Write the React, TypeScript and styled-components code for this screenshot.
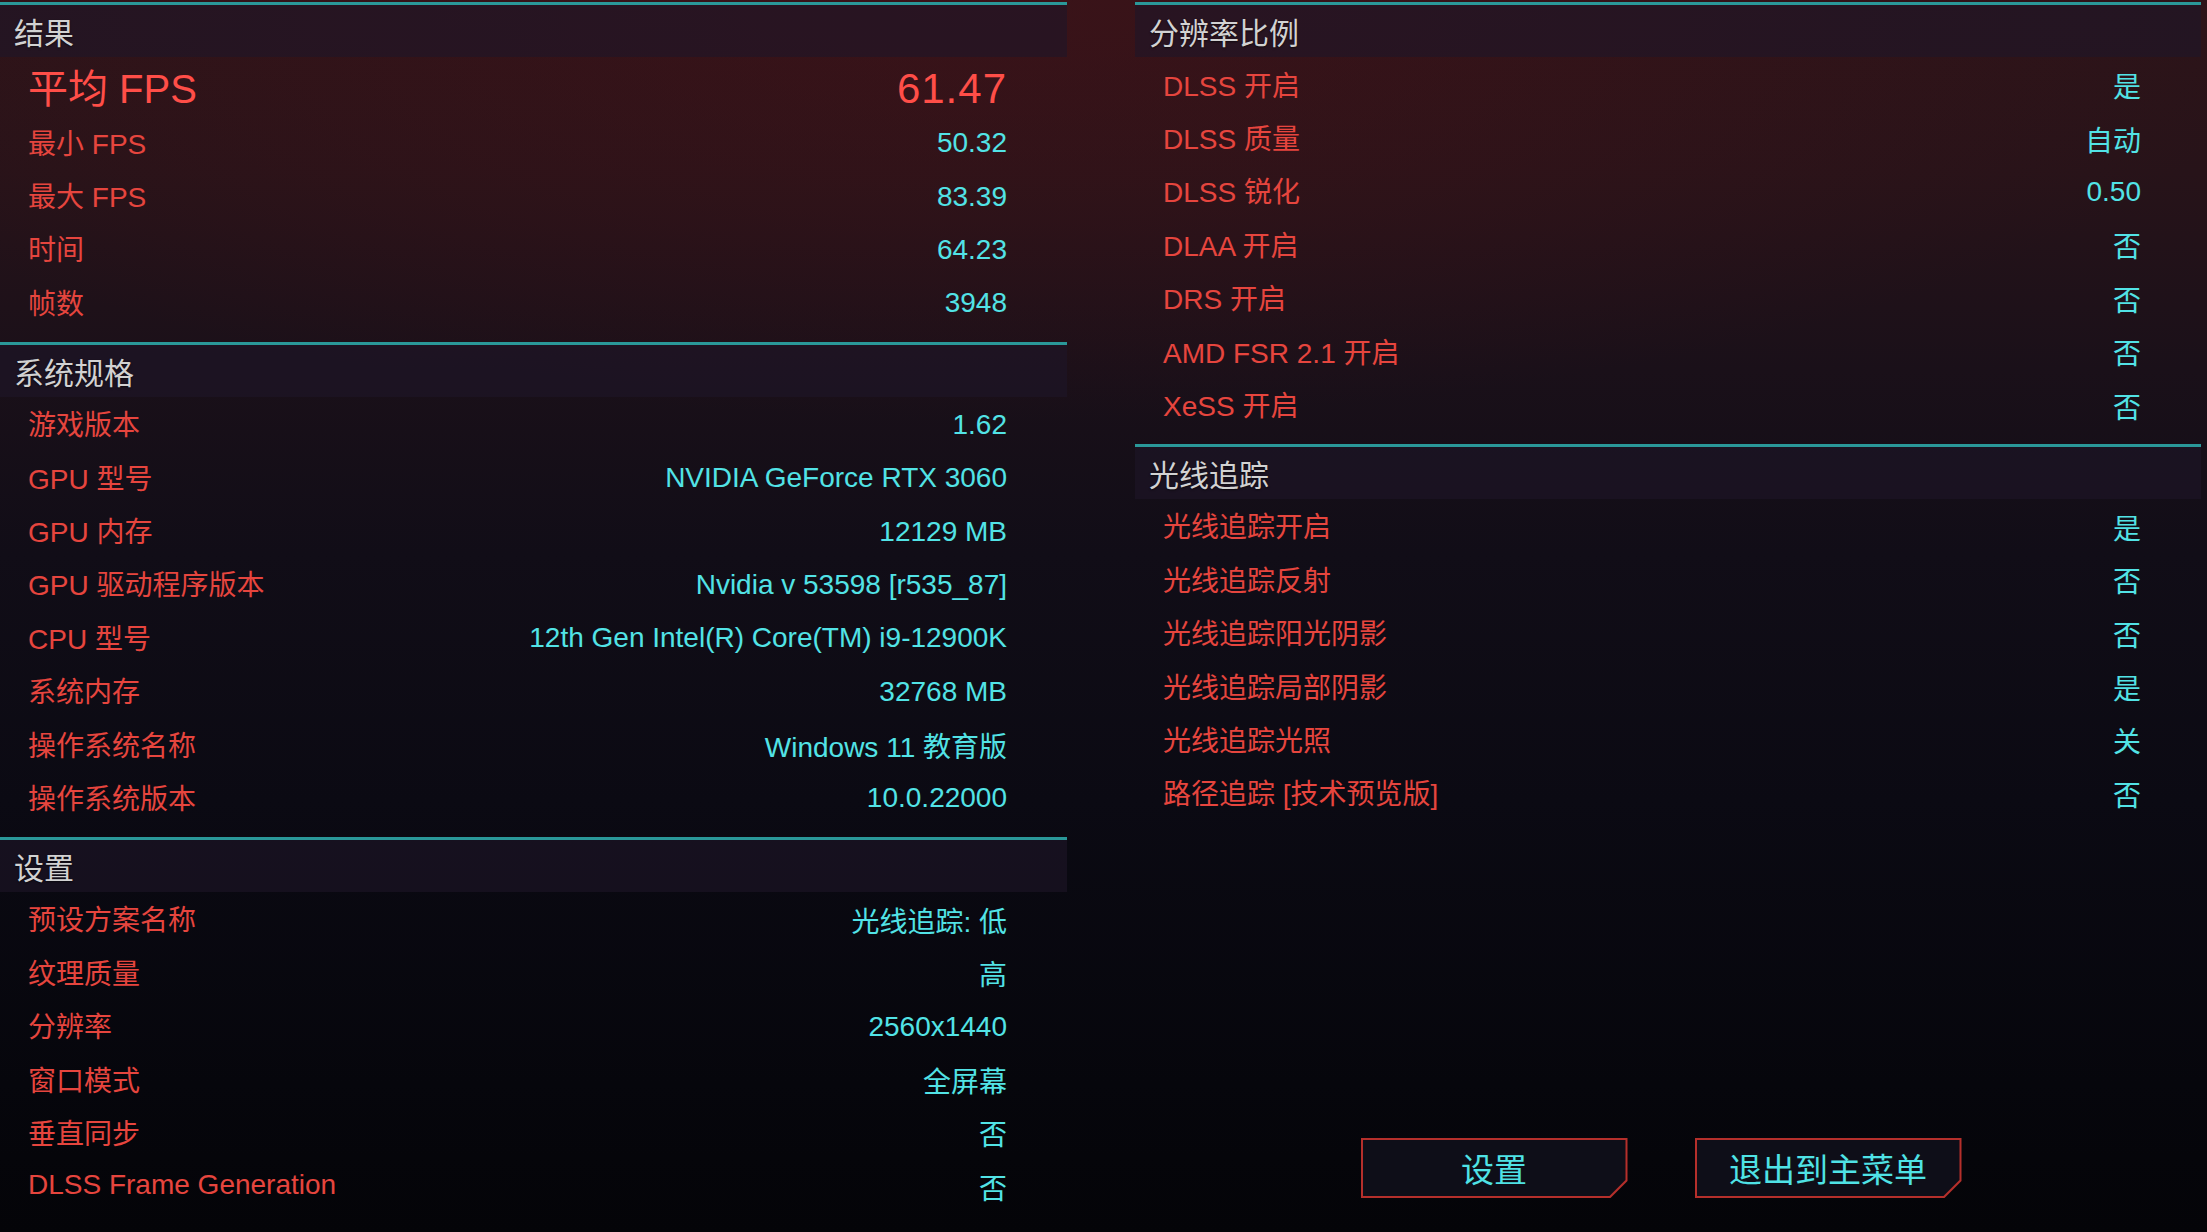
import React from 'react';
import styled, { createGlobalStyle } from 'styled-components';

const GlobalStyle = createGlobalStyle`
  html, body {
    margin: 0;
    padding: 0;
    background: #05050b;
  }
  body {
    font-family: 'Liberation Sans', 'Noto Sans CJK SC', sans-serif;
  }
`;

const Screen = styled.div`
  width: 2207px;
  height: 1232px;
  overflow: hidden;
  display: grid;
  grid-template-columns: 1067px 1066px;
  column-gap: 68px;
  background:
    radial-gradient(ellipse 1300px 420px at 45% 0%, rgba(70, 18, 24, 0.55), rgba(70, 18, 24, 0) 100%),
    linear-gradient(180deg, #2c1419 0%, #271319 14%, #1a1019 30%, #110d17 45%, #0b0a13 65%, #06060c 88%, #040408 100%);
`;

const Column = styled.div`
  display: flex;
  flex-direction: column;
  padding-top: 2px;
  height: 100%;
  box-sizing: border-box;
`;

const Section = styled.section`
  border-top: 3px solid #2a9899;
  padding-bottom: 13px;
`;

const SectionHeader = styled.div`
  height: 52px;
  display: flex;
  align-items: center;
  padding-left: 14px;
  background: rgba(30, 22, 40, 0.6);
  color: #d2d2d2;
  font-size: 30px;
  text-shadow: 0 1px 2px rgba(0, 0, 0, 0.6);
`;

const Row = styled.div<{ $big?: boolean }>`
  height: ${(p) => (p.$big ? '58px' : '53.4px')};
  display: flex;
  align-items: center;
  justify-content: space-between;
  padding: 0 60px 0 28px;
`;

const Label = styled.span<{ $big?: boolean }>`
  color: ${(p) => (p.$big ? '#ff4e48' : '#e6453e')};
  font-size: ${(p) => (p.$big ? '40px' : '28px')};
  white-space: nowrap;
`;

const Value = styled.span<{ $big?: boolean }>`
  color: ${(p) => (p.$big ? '#ff4e48' : '#52e3e6')};
  font-size: ${(p) => (p.$big ? '42px' : '28px')};
  letter-spacing: ${(p) => (p.$big ? '1px' : '0')};
  margin-top: ${(p) => (p.$big ? '6px' : '3px')};
  white-space: nowrap;
`;

const ButtonBar = styled.div`
  margin-top: auto;
  display: flex;
  justify-content: center;
  gap: 67px;
  padding: 0 14px 34px 0;
`;

const chamfer = (n: number) =>
  `polygon(0 0, 100% 0, 100% calc(100% - ${n}px), calc(100% - ${n}px) 100%, 0 100%)`;

const MenuButton = styled.div`
  width: 267px;
  height: 60px;
  padding: 2px;
  box-sizing: border-box;
  background: #b52f2b;
  clip-path: ${chamfer(17)};
`;

const MenuButtonFace = styled.div`
  width: 100%;
  height: 100%;
  display: flex;
  align-items: center;
  justify-content: center;
  background: #0e0e18;
  clip-path: ${chamfer(16)};
  color: #4fe2e5;
  font-size: 33px;
`;

type Item = [string, string];

const results: Item[] = [
  ['最小 FPS', '50.32'],
  ['最大 FPS', '83.39'],
  ['时间', '64.23'],
  ['帧数', '3948'],
];

const system: Item[] = [
  ['游戏版本', '1.62'],
  ['GPU 型号', 'NVIDIA GeForce RTX 3060'],
  ['GPU 内存', '12129 MB'],
  ['GPU 驱动程序版本', 'Nvidia v 53598 [r535_87]'],
  ['CPU 型号', '12th Gen Intel(R) Core(TM) i9-12900K'],
  ['系统内存', '32768 MB'],
  ['操作系统名称', 'Windows 11 教育版'],
  ['操作系统版本', '10.0.22000'],
];

const settings: Item[] = [
  ['预设方案名称', '光线追踪: 低'],
  ['纹理质量', '高'],
  ['分辨率', '2560x1440'],
  ['窗口模式', '全屏幕'],
  ['垂直同步', '否'],
  ['DLSS Frame Generation', '否'],
];

const scaling: Item[] = [
  ['DLSS 开启', '是'],
  ['DLSS 质量', '自动'],
  ['DLSS 锐化', '0.50'],
  ['DLAA 开启', '否'],
  ['DRS 开启', '否'],
  ['AMD FSR 2.1 开启', '否'],
  ['XeSS 开启', '否'],
];

const rayTracing: Item[] = [
  ['光线追踪开启', '是'],
  ['光线追踪反射', '否'],
  ['光线追踪阳光阴影', '否'],
  ['光线追踪局部阴影', '是'],
  ['光线追踪光照', '关'],
  ['路径追踪 [技术预览版]', '否'],
];

function Rows({ items }: { items: Item[] }) {
  return (
    <>
      {items.map(([label, value]) => (
        <Row key={label}>
          <Label>{label}</Label>
          <Value>{value}</Value>
        </Row>
      ))}
    </>
  );
}

export default function App() {
  return (
    <>
      <GlobalStyle />
      <Screen>
        <Column>
          <Section>
            <SectionHeader>结果</SectionHeader>
            <Row $big>
              <Label $big>平均 FPS</Label>
              <Value $big>61.47</Value>
            </Row>
            <Rows items={results} />
          </Section>
          <Section>
            <SectionHeader>系统规格</SectionHeader>
            <Rows items={system} />
          </Section>
          <Section>
            <SectionHeader>设置</SectionHeader>
            <Rows items={settings} />
          </Section>
        </Column>
        <Column>
          <Section>
            <SectionHeader>分辨率比例</SectionHeader>
            <Rows items={scaling} />
          </Section>
          <Section>
            <SectionHeader>光线追踪</SectionHeader>
            <Rows items={rayTracing} />
          </Section>
          <ButtonBar>
            <MenuButton>
              <MenuButtonFace>设置</MenuButtonFace>
            </MenuButton>
            <MenuButton>
              <MenuButtonFace>退出到主菜单</MenuButtonFace>
            </MenuButton>
          </ButtonBar>
        </Column>
      </Screen>
    </>
  );
}
